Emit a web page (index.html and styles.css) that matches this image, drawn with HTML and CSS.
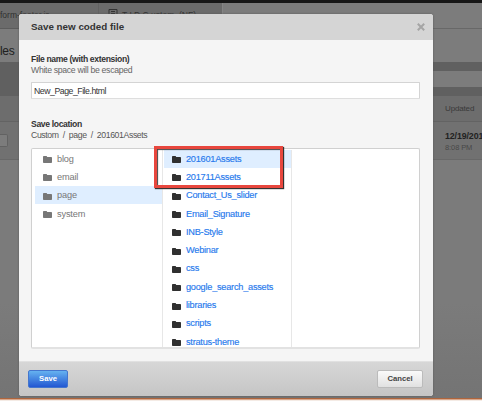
FILE: index.html
```html
<!DOCTYPE html>
<html lang="en">
<head>
<meta charset="utf-8">
<title>Save new coded file</title>
<link rel="stylesheet" href="styles.css">
</head>
<body>
<svg class="defs" width="0" height="0"><symbol id="folder" viewBox="0 0 9 7"><path d="M0 1.6V.8Q0 0 .8 0H3.3Q4 0 4.2.9H8.2Q9 .9 9 1.7V6.3Q9 7 8.2 7H.8Q0 7 0 6.3Z" fill="currentColor"/></symbol></svg>
<main class="page">
  <div class="topbar"></div>
  <div class="tabs"><div class="tab first">form-footer.js</div><div class="tab second"><svg width="10" height="9" viewBox="0 0 10 9"><path d="M1 .5H9V9H1ZM3 2.5H7M3 4.5H7M3 6.5H7" fill="none" stroke="#333" stroke-width="1"/></svg><span>T I D C ustom &nbsp;(NF)</span></div><div class="tabrest"></div></div>
  <div class="heading">les</div>
  <div class="toolbar"><div class="search"></div></div>
  <div class="tablehead"><span>Updated</span></div>
  <div class="tablerow"><div class="chip"></div><div class="date"><b>12/19/201</b><span>8:08 PM</span></div></div>
  <div class="rest"></div>
  <div class="strip"></div>
</main>
<section class="modal">
  <header class="modalhead"><h1>Save new coded file</h1><svg width="8" height="8" viewBox="0 0 8 8"><path d="M.8 .8 7.2 7.2M7.2 .8 .8 7.2" stroke="#a5a5a5" stroke-width="2"/></svg></header>
  <div class="body">
    <label class="label name">File name (with extension)</label>
    <div class="hint">White space will be escaped</div>
    <div class="input"><span>New_Page_File.html</span></div>
    <div class="label location">Save location</div>
    <div class="crumbs">Custom&nbsp; /&nbsp; page&nbsp; /&nbsp; 201601Assets</div>
    <div class="picker">
      <div class="col parents">
        <div class="row"><svg><use href="#folder"/></svg><span>blog</span></div>
        <div class="row"><svg><use href="#folder"/></svg><span>email</span></div>
        <div class="row on"><svg><use href="#folder"/></svg><span>page</span></div>
        <div class="row"><svg><use href="#folder"/></svg><span>system</span></div>
      </div>
      <div class="col children">
        <div class="row on"><svg><use href="#folder"/></svg><span>201601Assets</span></div>
        <div class="row"><svg><use href="#folder"/></svg><span>201711Assets</span></div>
        <div class="row"><svg><use href="#folder"/></svg><span>Contact_Us_slider</span></div>
        <div class="row"><svg><use href="#folder"/></svg><span>Email_Signature</span></div>
        <div class="row"><svg><use href="#folder"/></svg><span>INB-Style</span></div>
        <div class="row"><svg><use href="#folder"/></svg><span>Webinar</span></div>
        <div class="row"><svg><use href="#folder"/></svg><span>css</span></div>
        <div class="row"><svg><use href="#folder"/></svg><span>google_search_assets</span></div>
        <div class="row"><svg><use href="#folder"/></svg><span>libraries</span></div>
        <div class="row"><svg><use href="#folder"/></svg><span>scripts</span></div>
        <div class="row"><svg><use href="#folder"/></svg><span>stratus-theme</span></div>
      </div>
    </div>
  </div>
  <footer class="foot"><button class="save">Save</button><button class="cancel">Cancel</button></footer>
</section>
<div class="callout"></div>
</body>
</html>
```
FILE: styles.css
```css
* { box-sizing: border-box; }
body { margin: 0; width: 482px; height: 401px; overflow: hidden; position: relative; font-family: "Liberation Sans", Arial, sans-serif; color: #333; background: #7b7b7b; }
.defs { position: absolute; }
.page { display: flex; flex-direction: column; height: 401px; overflow: hidden; }
.topbar { height: 3px; background: #171717; flex: none; }
.tabs { height: 26px; flex: none; display: flex; background: #6b6b6b; }
.tab { border-bottom: 1px solid #5c5c5c; font-size: 8.5px; line-height: 10px; padding-top: 7px; white-space: nowrap; overflow: hidden; color: #303030; }
.first { width: 99px; border-right: 1px solid #626262; }
.second { width: 123px; padding: 6px 0 0 9px; display: flex; gap: 4px; line-height: 12px; }
.tabrest { flex: 1; background: #7c7c7c; border-bottom: 1px solid #686868; border-left: 1px solid #858585; }
.heading { height: 33px; flex: none; font-size: 12px; letter-spacing: -.3px; line-height: 14px; padding-top: 15px; color: #202020; background: #7c7c7c; }
.toolbar { height: 34px; flex: none; padding: 9px 0; background: #606060; }
.search { margin-left: 420px; height: 16px; background: #7c7c7c; }
.tablehead { height: 26px; flex: none; background: #6d6d6d; border-bottom: 1px solid #636363; font-size: 8px; letter-spacing: -.15px; line-height: 26px; padding-left: 445px; color: #393939; }
.tablerow { height: 38px; flex: none; display: flex; background: #717171; border-bottom: 1px solid #686868; }
.chip { width: 8px; flex: none; height: 13px; margin-top: 12px; background: #7c7c7c; border: 1px solid #626262; border-left: 0; border-radius: 0 2px 2px 0; }
.date { margin-left: 437px; padding-top: 9px; font-size: 8.8px; letter-spacing: -.1px; line-height: 11px; color: #222; flex: none; }
.date b, .date span { display: block; }
.date span { font-size: 7.5px; color: #484848; line-height: 12px; }
.rest { flex: 1; background: linear-gradient(#7b7b7b 60%, #747474); }
.strip { flex: none; height: 3px; background: linear-gradient(#ad653d 0 1px, #d9a88c 1px 2px, #f4ebe5 2px); }
.modal { position: absolute; left: 19px; top: 14px; width: 414px; height: 382px; border-radius: 3px; overflow: hidden; background: #f5f5f5; box-shadow: 0 0 2px #555; display: flex; flex-direction: column; }
.modalhead { height: 26px; flex: none; background: #d5d5d5; display: flex; justify-content: space-between; align-items: center; padding: 0 8px 0 12px; }
h1 { margin: 0; font-size: 9.8px; line-height: 12px; white-space: nowrap; }
.body { flex: 1; padding: 13px 13px 0 12px; }
.label { display: block; font-size: 8.6px; letter-spacing: -.35px; font-weight: bold; line-height: 12px; white-space: nowrap; }
.hint, .crumbs { font-size: 8.7px; letter-spacing: -.31px; line-height: 10px; color: #666; white-space: nowrap; }
.input { margin-top: 7px; height: 17px; border: 1px solid #d4d4d4; border-bottom-color: #dedede; border-radius: 1px; background: #fff; padding-left: 2px; font-size: 8.7px; letter-spacing: -.45px; line-height: 16px; }
.location { margin-top: 19px; }
.crumbs { color: #555; letter-spacing: -.38px; }
.picker { margin-top: 8px; height: 201px; border: 1px solid #d0d0d0; border-bottom: 2px solid #e2e2e2; border-radius: 2px; background: #fff; display: flex; padding: .5px 0 0 3px; overflow: hidden; }
.col { width: 128px; border-right: 1px solid #e7e7e7; }
.children { width: 129px; padding-left: 1px; color: #287aed; -webkit-text-stroke: .15px #287aed; }
.row { height: 18.3px; display: flex; align-items: center; padding-left: 8px; gap: 5px; font-size: 9.2px; letter-spacing: -.15px; white-space: nowrap; }
.children .row { letter-spacing: -.24px; }
.parents .row { color: #777; }
.row svg { width: 9px; height: 7px; flex: none; margin-top: 2px; }
.children svg { color: #303030; }
.on { background: #dfeeff; }
.foot { height: 35px; flex: none; background: linear-gradient(#d7d7d7, #c5c5c5); border-top: 1px solid #e1e1e1; padding: 8px 10px 0 9px; display: flex; justify-content: space-between; }
button { font: bold 7.7px/16px "Liberation Sans", Arial, sans-serif; height: 18px; padding: 0; border-radius: 2px; }
.save { width: 40px; color: #fff; border: 1px solid #4476ce; background: linear-gradient(#65b2f0, #2357d2); }
.cancel { width: 46px; color: #444; border: 1px solid #bbb; background: linear-gradient(#fafafa, #e1e1e1); }
.callout { position: absolute; left: 154px; top: 146px; width: 129px; height: 42px; border: 3px solid #e8473e; box-shadow: 1px 1px 1px #333, inset 1px 1px 1px #444; }
```
